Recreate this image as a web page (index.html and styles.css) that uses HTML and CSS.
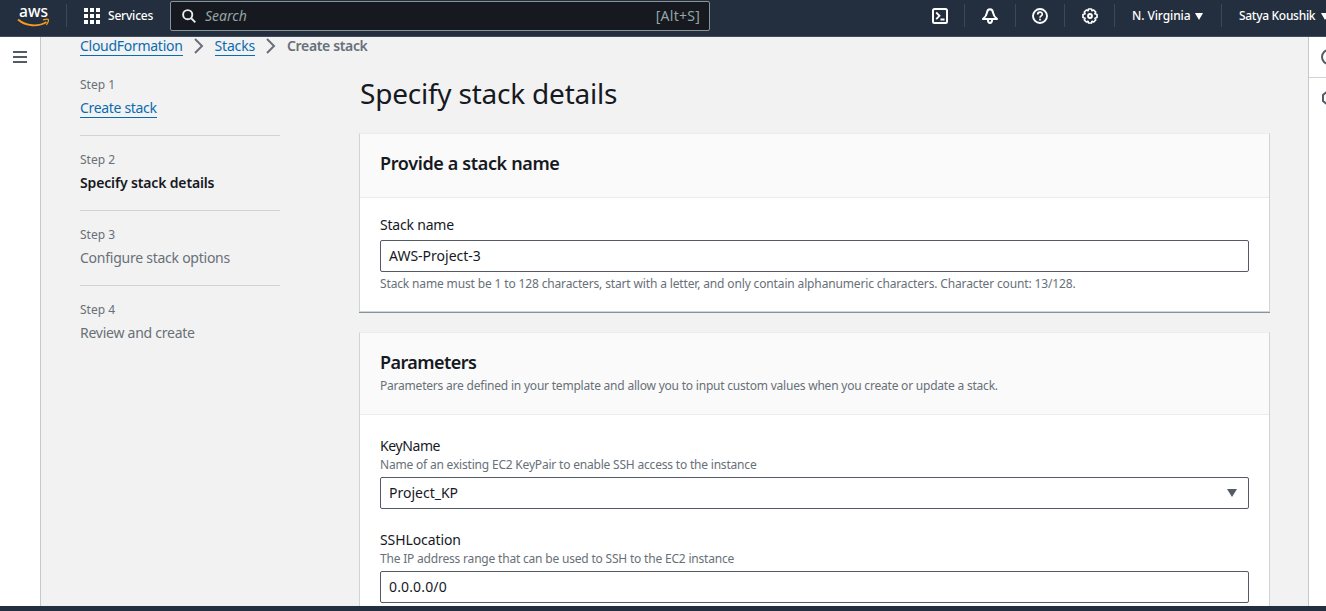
FILE: index.html
```html
<!DOCTYPE html>
<html lang="en">
<head>
<meta charset="utf-8">
<title>Specify stack details</title>
<link rel="stylesheet" href="styles.css">
</head>
<body>
<div class="app">
  <header class="topbar">
    <a class="logo"><svg width="34" height="30" viewBox="0 0 34 30"><text class="logo-text" x="2" y="17" textLength="29" lengthAdjust="spacingAndGlyphs">aws</text><path d="M1 19.500C9 26.500 21.500 27 29.500 22" fill="none" stroke="#f79a1e" stroke-width="1.900"/><path d="M26 19.800c2.500-.8 4.800-.8 5.300-.3.500.8-.3 3.800-2 5.400" fill="none" stroke="#f79a1e" stroke-width="1.300"/></svg></a>
    <span class="divider"></span>
    <a class="services"><svg width="16" height="16" viewBox="0 0 16 16" fill="#fff"><path d="M0 0h4v4H0zM6 0h4v4H6zM12 0h4v4h-4zM0 6h4v4H0zM6 6h4v4H6zM12 6h4v4h-4zM0 12h4v4H0zM6 12h4v4H6zM12 12h4v4h-4z"/></svg><span class="nav-text services-text">Services</span></a>
    <div class="search">
      <svg width="14" height="14" viewBox="0 0 14 14" fill="none" stroke="#eaeded" stroke-width="1.900"><circle cx="5.700" cy="5.700" r="4.600"/><path d="M9 9l4.300 4.300"/></svg>
      <span class="placeholder">Search</span><span class="shortcut">[Alt+S]</span>
    </div>
    <nav class="tools">
      <a class="tool tool-first"><svg width="16" height="16" viewBox="0 0 16 16" fill="none" stroke="#fff" stroke-width="2"><rect x="1" y="1" width="14" height="14" rx="1.500"/><path d="M4.200 4.500L7.500 7.800 4.200 11.200M8.500 11.500h4" stroke-width="1.800"/></svg></a>
      <a class="tool tool-bell"><svg width="16" height="16" viewBox="0 0 16 16" fill="none" stroke="#fff" stroke-width="2" stroke-linejoin="round"><path d="M8 1.300C6.400 1.300 5.200 2.600 4.900 4.800 4.600 7.200 3.400 8.900 1 11.100h14C12.600 8.900 11.400 7.200 11.100 4.800 10.800 2.600 9.600 1.300 8 1.300zM5.900 11.500c0 4.600 4.200 4.600 4.200 0"/></svg></a>
      <a class="tool tool-help"><svg width="16" height="16" viewBox="0 0 16 16" fill="none" stroke="#fff" stroke-width="1.900"><circle cx="8" cy="8" r="7"/><path d="M5.700 6.500c0-3 4.600-3 4.600-.3 0 1.700-2.300 1.700-2.300 3.600M8 10.800v1.800" stroke-width="1.700"/></svg></a>
      <a class="tool"><svg width="16" height="16" viewBox="0 0 16 16" fill="none" stroke="#fff" stroke-width="1.700"><path stroke-linejoin="round" d="M6.500 1h3l.5 1.700 1.700-.7 2 2-.8 1.800 2.100.7v3l-2.100.7.8 1.800-2 2-1.700-.7-.5 1.700h-3L6 13.300l-1.700.7-2-2 .8-1.800L1 9.500v-3l2.100-.7L2.300 4l2-2 1.700.7z"/><circle cx="8" cy="8" r="1.900" stroke-width="2"/></svg></a>
      <a class="region"><span class="nav-text region-text">N. Virginia</span><i class="caret"></i></a>
      <a class="account"><span class="nav-text account-text">Satya Koushik</span><i class="caret"></i></a>
    </nav>
  </header>
  <div class="body">
    <aside class="left-rail"><span class="bar"></span><span class="bar"></span><span class="bar"></span></aside>
    <main class="content">
      <nav class="crumbs">
        <a class="link crumb-a">CloudFormation</a>
        <svg width="10" height="16" viewBox="0 0 10 16" fill="none" stroke="#687078" stroke-width="2"><path d="M1 1l7 7-7 7"/></svg>
        <a class="link crumb-b">Stacks</a>
        <svg width="10" height="16" viewBox="0 0 10 16" fill="none" stroke="#687078" stroke-width="2"><path d="M1 1l7 7-7 7"/></svg>
        <span class="crumb-current">Create stack</span>
      </nav>
      <div class="columns">
        <ol class="steps">
          <li class="step"><span class="step-no">Step 1</span><span class="step-name"><a class="link s1">Create stack</a></span></li>
          <li class="step"><span class="step-no">Step 2</span><span class="step-name active">Specify stack details</span></li>
          <li class="step"><span class="step-no">Step 3</span><span class="step-name">Configure stack options</span></li>
          <li class="step"><span class="step-no">Step 4</span><span class="step-name">Review and create</span></li>
        </ol>
        <section class="form">
          <h1 class="title">Specify stack details</h1>
          <div class="card name-card">
            <div class="card-head"><h2 class="h2-name">Provide a stack name</h2></div>
            <div class="card-body">
              <div class="label label-name">Stack name</div>
              <div class="input">AWS-Project-3</div>
              <div class="hint hint-name">Stack name must be 1 to 128 characters, start with a letter, and only contain alphanumeric characters. Character count: 13/128.</div>
            </div>
          </div>
          <div class="card">
            <div class="card-head params-head"><h2 class="h2-params">Parameters</h2><p class="hint head-hint">Parameters are defined in your template and allow you to input custom values when you create or update a stack.</p></div>
            <div class="card-body">
              <div class="label label-key">KeyName</div>
              <div class="hint hint-key">Name of an existing EC2 KeyPair to enable SSH access to the instance</div>
              <div class="input select"><span>Project_KP</span><i class="caret dark"></i></div>
              <div class="label label-ssh">SSHLocation</div>
              <div class="hint hint-ssh">The IP address range that can be used to SSH to the EC2 instance</div>
              <div class="input cidr">0.0.0.0/0</div>
            </div>
          </div>
        </section>
      </div>
    </main>
    <aside class="right-rail">
      <div class="rail-item rail-info"><svg width="16" height="16" viewBox="0 0 16 16" fill="none" stroke="#545b64" stroke-width="2"><circle cx="8" cy="8" r="7"/></svg></div>
      <div class="rail-item"><svg width="16" height="16" viewBox="0 0 16 16" fill="none" stroke="#545b64" stroke-width="2"><path d="M5 2.500L2 5v6l3 2.500h7V2.500z"/></svg></div>
    </aside>
  </div>
  <footer class="bottom"></footer>
</div>
</body>
</html>
```
FILE: styles.css
```css
* { box-sizing: border-box; }
body { margin: 0; font: 14px/20px "Noto Sans", "Open Sans", sans-serif; color: #16191f; }
h1, h2, p, ol { margin: 0; padding: 0; }
svg { display: block; flex: none; }
span, a, h1, h2, .label, .hint { white-space: nowrap; }
.app { width: 1326px; height: 611px; overflow: hidden; display: flex; flex-direction: column; background: #f2f2f2; }

.topbar { flex: none; height: 37px; background: #232f3e; border-bottom: 1px solid #414d5c; display: flex; color: #fff; }
.logo { padding: 0 0 0 17px; width: 66px; }
.logo-text { font: 500 17px "Noto Sans", sans-serif; fill: #fff; }
.divider { width: 1px; height: 23px; margin-top: 4px; background: #3b4858; }
.services { display: flex; gap: 8px; padding: 8px 0 0 17px; width: 103px; }
.nav-text { font-size: 12px; line-height: 16px; font-weight: 500; }
.services-text { letter-spacing: -.2px; }
.region-text { letter-spacing: -.1px; }
.account-text { letter-spacing: -.3px; }
.search { width: 540px; height: 30px; margin-top: 1px; border: 1px solid #879596; border-radius: 2px; background: #16191f; display: flex; align-items: center; padding: 0 9px 0 11px; color: #95a5a6; }
.placeholder { margin-left: 9px; font-style: italic; }
.shortcut { margin-left: auto; letter-spacing: .25px; }
.tools { margin-left: auto; display: flex; width: 412px; padding-top: 4px; height: 27px; }
.tool { width: 50px; padding: 4px 0 0 17px; border-left: 1px solid #3b4858; height: 23px; flex: none; }
.tool-first { border-left-color: transparent; }
.tool-bell { width: 51px; }
.tool-help { width: 49px; padding-left: 16px; }
.region, .account { height: 23px; display: flex; padding: 4px 0 0 17px; border-left: 1px solid #3b4858; width: 107px; flex: none; }
.caret { width: 0; height: 0; border: 4px solid transparent; border-top: 7px solid #fff; border-bottom: 0; margin: 5px 0 0 5px; flex: none; }
.account .caret { margin-left: 6px; }

.body { flex: 1; min-height: 0; display: flex; }
.left-rail { width: 41px; background: #fff; border-right: 1px solid #c5c9cc; padding: 14px 0 0 13px; display: flex; flex-direction: column; gap: 3px; }
.bar { width: 14px; height: 2px; background: #545b64; }
.content { width: 1267px; padding: 0 38px 0 39px; overflow: hidden; }
.crumbs { display: flex; height: 19px; gap: 11px; align-items: flex-start; line-height: 18px; }
.crumbs svg { margin-top: 1px; }
.link { color: #0a6cb0; border-bottom: 1px solid #0a6cb0; display: inline-block; line-height: 18px; }
.crumb-a { letter-spacing: -.28px; }
.crumb-b { letter-spacing: -.17px; }
.s1 { letter-spacing: -.33px; }
.crumb-current { color: #687078; font-weight: 600; letter-spacing: -.35px; }
.columns { display: flex; }
.steps { list-style: none; width: 200px; margin-right: 80px; padding-top: 19px; flex: none; }
.step { height: 75px; padding-top: 14px; display: flex; flex-direction: column; }
.step + .step { border-top: 1px solid #d0d4d6; }
.step:first-child { height: 60px; padding-top: 0; }
.step-no { font-size: 12px; line-height: 20px; color: #687078; }
.step-name { line-height: 26px; color: #687078; letter-spacing: -.25px; }
.active { color: #16191f; font-weight: 600; letter-spacing: -.15px; }
.form { width: 911px; flex: none; margin-left: -1px; }
.title { font-size: 28px; line-height: 36px; font-weight: 400; padding: 19px 0 0 1px; height: 77px; letter-spacing: -.22px; }
.card { background: #fff; border: 1px solid #d0d4d6; border-top-color: #eaeded; height: 400px; box-shadow: 0 1px 0 #87959a; }
.name-card { margin-bottom: 20px; height: 179px; }
.card-head { background: #fafafa; border-bottom: 1px solid #eaeded; padding: 17px 20px 0; height: 64px; }
.params-head { height: 82px; }
.card-head h2 { font-size: 18px; line-height: 24px; font-weight: 600; letter-spacing: -.36px; }
.card-head .h2-params { letter-spacing: -.56px; }
.card-body { padding: 17px 20px 0; }
.label { line-height: 20px; height: 25px; letter-spacing: -.2px; }
.input { height: 32px; border: 1px solid #545b64; border-radius: 2px; padding: 5px 8px; line-height: 20px; width: 869px; display: flex; }
.cidr { letter-spacing: .15px; }
.hint { font-size: 12px; line-height: 16px; color: #687078; letter-spacing: -.195px; }
.head-hint { margin-top: 4px; letter-spacing: -.21px; }
.hint-name { margin-top: 4px; letter-spacing: -.145px; }
.label-key, .label-ssh { height: 21px; }
.label-key { margin-top: 4px; letter-spacing: -.4px; }
.label-ssh { letter-spacing: -.1px; margin-top: 21px; }
.hint-key, .hint-ssh { height: 20px; }
.select { justify-content: space-between; }
.caret.dark { border-width: 8px 5.500px 0; border-top-color: #545b64; margin: 6px 3px 0 0; }
.right-rail { width: 18px; flex: none; background: #fff; border-left: 1px solid #c5c9cc; overflow: hidden; }
.rail-item { padding: 12px 0 0 12px; }
.rail-info { height: 41px; border-bottom: 1px solid #d0d4d6; }
.bottom { height: 5px; background: #232f3e; flex: none; }
```
